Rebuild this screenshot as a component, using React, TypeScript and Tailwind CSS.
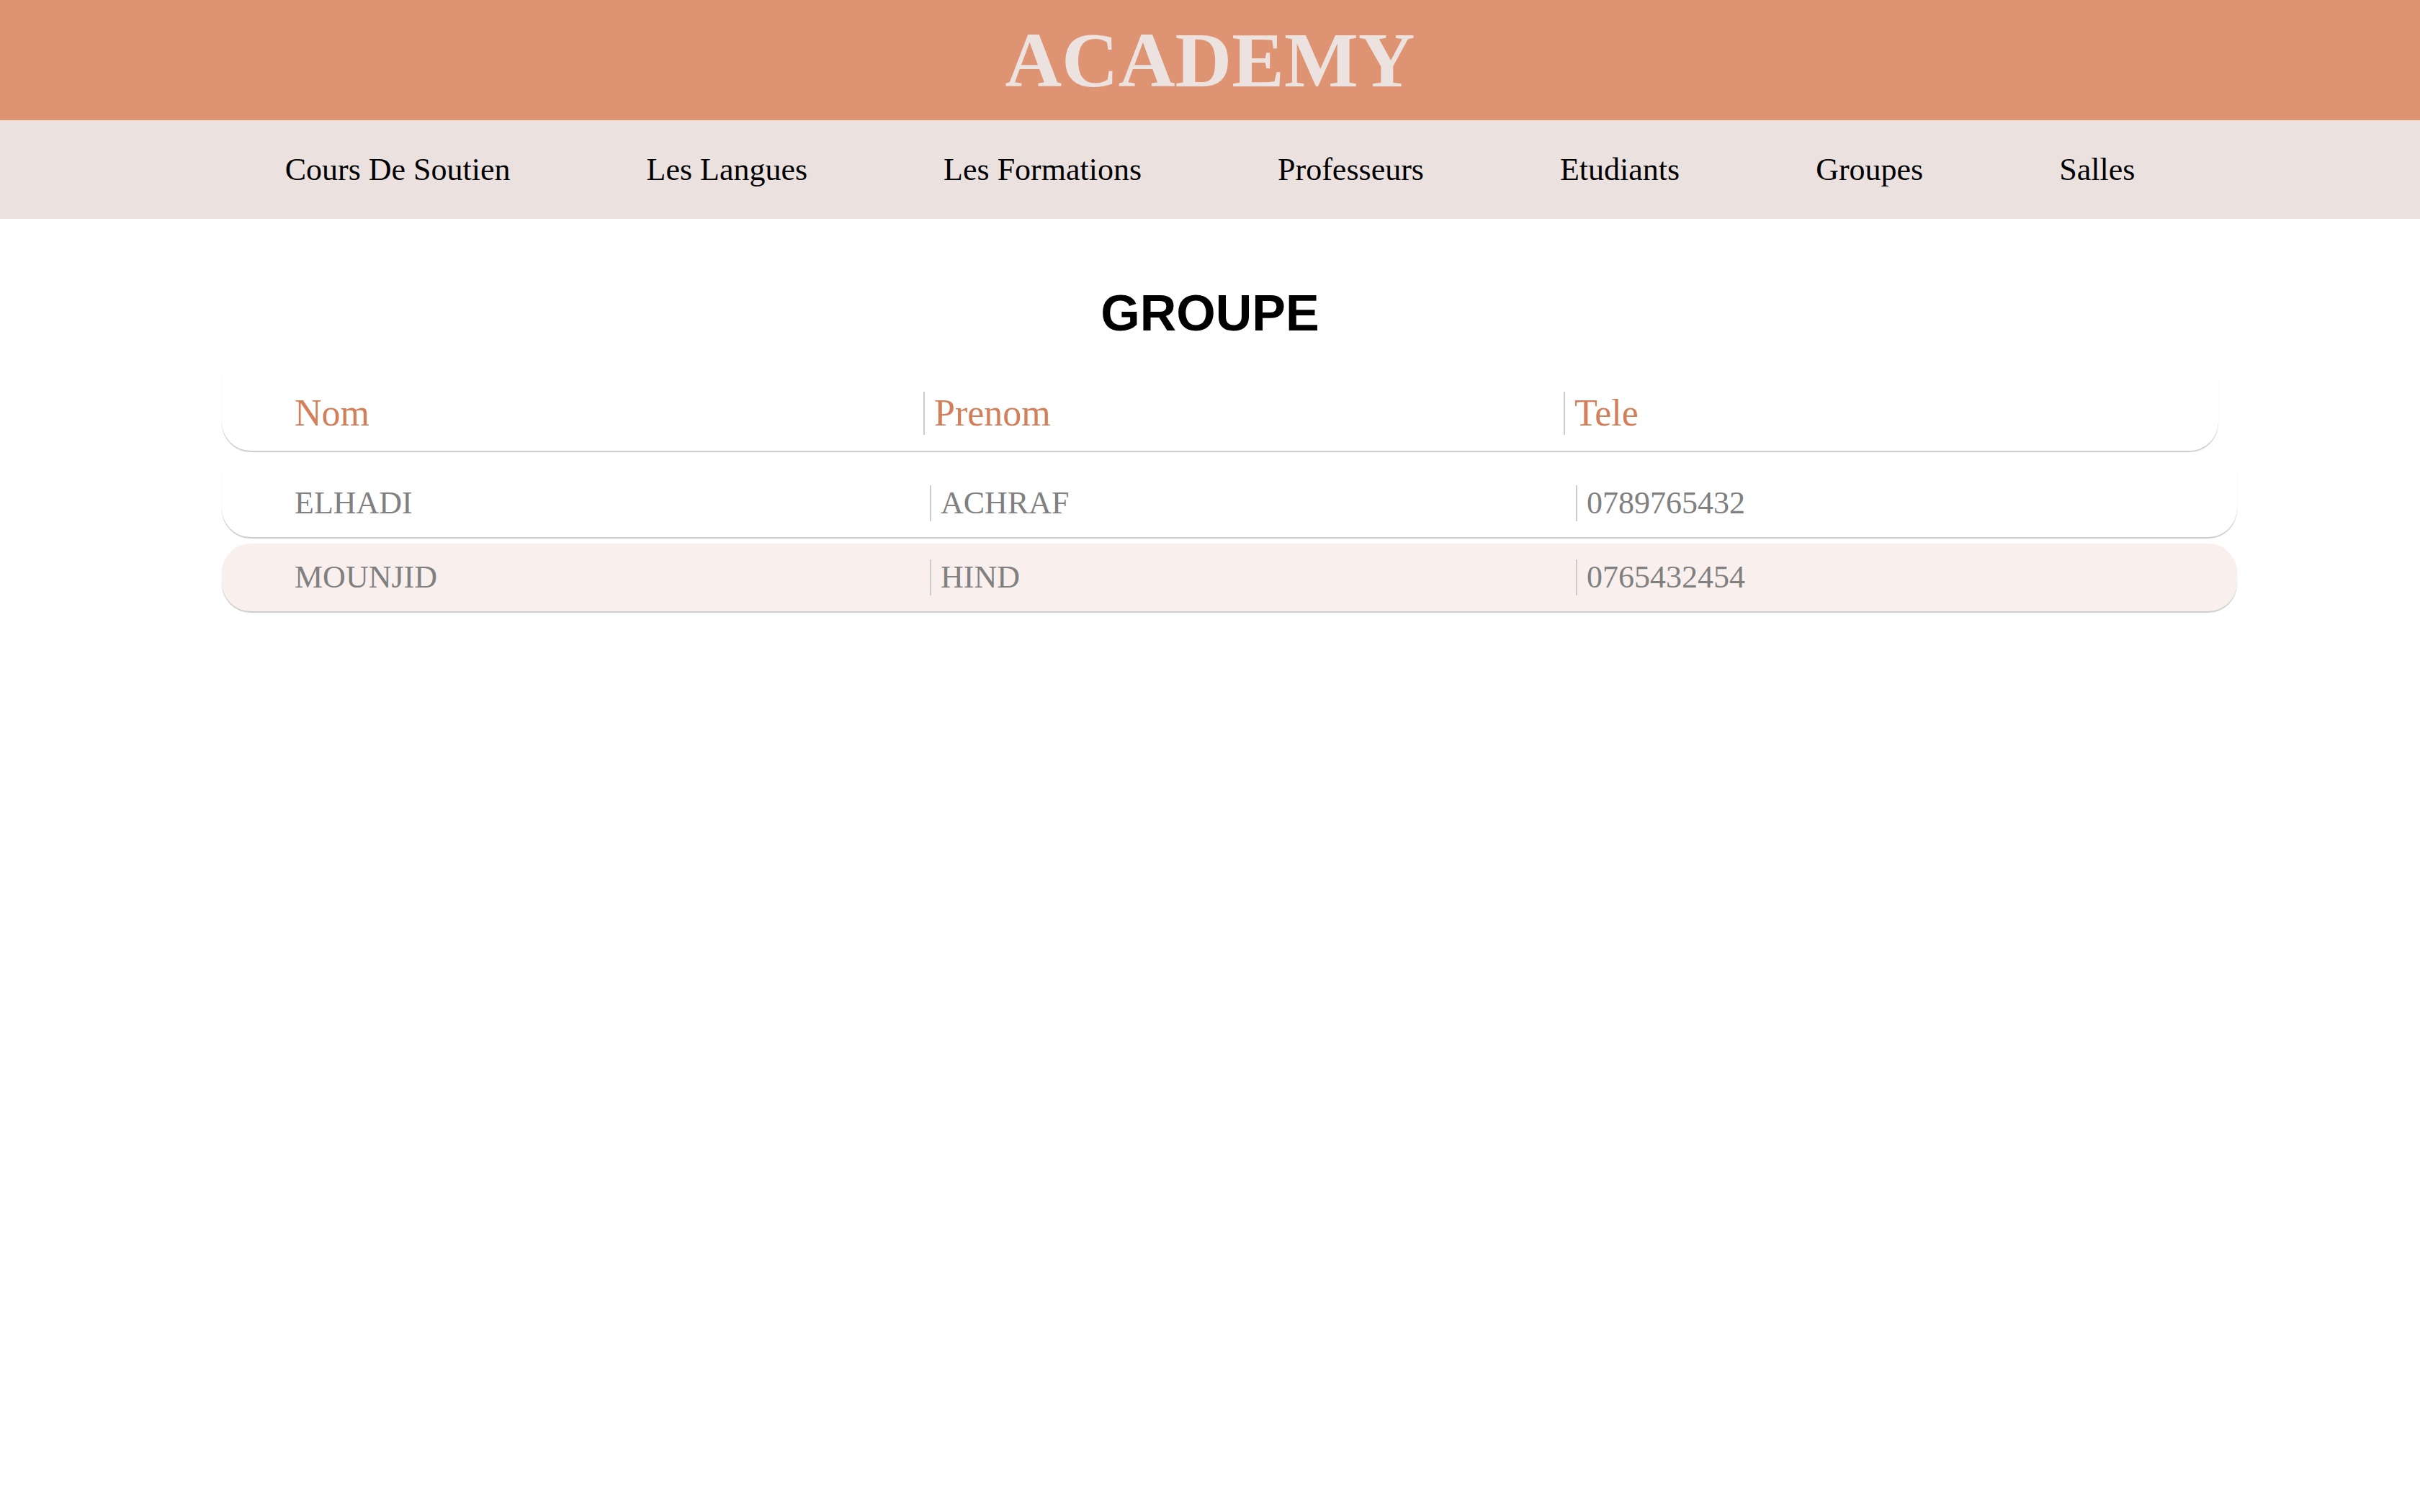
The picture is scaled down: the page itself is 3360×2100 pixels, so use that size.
import React from 'react';

const navItems = [
  'Cours De Soutien',
  'Les Langues',
  'Les Formations',
  'Professeurs',
  'Etudiants',
  'Groupes',
  'Salles',
];

const rows = [
  { nom: 'ELHADI', prenom: 'ACHRAF', tele: '0789765432', shaded: false },
  { nom: 'MOUNJID', prenom: 'HIND', tele: '0765432454', shaded: true },
];

const serif = "font-['Liberation_Serif','Times_New_Roman',serif]";

function Header() {
  return (
    <header className="h-[167px] bg-[#de9473] flex items-center justify-center">
      <h1 className={`${serif} text-[109px] leading-none font-bold text-[#ece2e0]`}>
        ACADEMY
      </h1>
    </header>
  );
}

function NavBar() {
  return (
    <nav className="h-[137px] bg-[#ebe2e0] flex items-center justify-center gap-[189px]">
      {navItems.map((item) => (
        <a key={item} className={`${serif} text-[44px] leading-none text-black`}>
          {item}
        </a>
      ))}
    </nav>
  );
}

function GroupTable() {
  return (
    <div className="ml-[308px] mt-[51px]">
      {/* header row */}
      <div className="w-[2772px] h-[105px] bg-white rounded-b-[40px] shadow-[0_2px_1px_rgba(0,0,0,0.2)] grid grid-cols-[974px_889px_1fr] items-center">
        <div className={`${serif} pl-[101px] text-[52px] leading-none text-[#d27f5a]`}>Nom</div>
        <div className={`${serif} h-[60px] flex items-center border-l-2 border-[#cccccc] pl-[13px] text-[52px] leading-none text-[#d27f5a]`}>
          Prenom
        </div>
        <div className={`${serif} h-[60px] flex items-center border-l-2 border-[#cccccc] pl-[13px] text-[52px] leading-none text-[#d27f5a]`}>
          Tele
        </div>
      </div>

      <div className="mt-[26px] flex flex-col gap-[9px]">
        {rows.map((r) => (
          <div
            key={r.nom}
            className={`w-[2798px] h-[94px] grid grid-cols-[983px_897px_1fr] items-center shadow-[0_2px_1px_rgba(0,0,0,0.2)] ${
              r.shaded ? 'bg-[#f9efec] rounded-[40px]' : 'bg-white rounded-b-[40px]'
            }`}
          >
            <div className={`${serif} pl-[101px] text-[44px] leading-none text-[#808080]`}>{r.nom}</div>
            <div className={`${serif} h-[50px] flex items-center border-l-2 border-[#cccccc] pl-[13px] text-[44px] leading-none text-[#808080]`}>
              {r.prenom}
            </div>
            <div className={`${serif} h-[50px] flex items-center border-l-2 border-[#cccccc] pl-[13px] text-[44px] leading-none text-[#808080]`}>
              {r.tele}
            </div>
          </div>
        ))}
      </div>
    </div>
  );
}

export default function App() {
  return (
    <div className="min-h-screen bg-white">
      <Header />
      <NavBar />
      <h2 className="mt-[96px] text-center font-['Liberation_Sans',Arial,sans-serif] font-bold text-[70px] leading-none text-black">
        GROUPE
      </h2>
      <GroupTable />
    </div>
  );
}
